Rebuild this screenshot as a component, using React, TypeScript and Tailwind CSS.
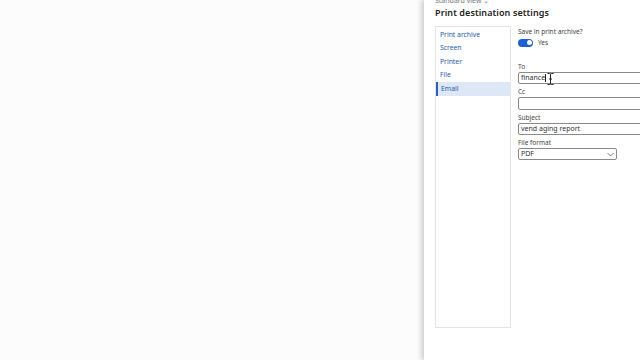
import React from 'react';

const navItems = ['Print archive', 'Screen', 'Printer', 'File', 'Email'];

const IBeam: React.FC = () => (
  <svg width="7" height="12" viewBox="0 0 7 12" className="absolute left-[28px] top-[0px]">
    <path d="M0.5 0.5 H2.5 Q3.5 0.5 3.5 1.5 V10.5 Q3.5 11.5 2.5 11.5 H0.5 M6.5 0.5 H4.5 Q3.5 0.5 3.5 1.5 M3.5 10.5 Q3.5 11.5 4.5 11.5 H6.5 M2 6 H5" fill="none" stroke="#222" strokeWidth="1" />
  </svg>
);

const Field: React.FC<{ label: string; value?: string; children?: React.ReactNode }> = ({ label, value, children }) => (
  <div className="flex flex-col">
    <span className="text-[6.5px] leading-[10px] text-[#444]">{label}</span>
    <div className="relative h-[12.5px] w-[130px] border border-[#8a8a8a] rounded-[2px] bg-white flex items-center px-[2px] text-[7px] text-[#333]">
      {value}
      {children}
    </div>
  </div>
);

const App: React.FC = () => {
  return (
    <div className="w-[640px] h-[360px] flex bg-[#fcfcfc] overflow-hidden" style={{ fontFamily: '"Noto Sans", "Open Sans", sans-serif' }}>
      <div className="w-[424px] shrink-0" />
      <div className="flex-1 bg-white shadow-[-3px_0_5px_rgba(0,0,0,0.18)] flex flex-col pl-[11px] overflow-hidden">
        <div className="text-[7px] leading-[8px] text-[#777] -mt-[3px] h-[8px]">Standard view ⌄</div>
        <div className="text-[9px] font-semibold text-[#222] leading-[12px] mt-[2px] tracking-[0.1px]">Print destination settings</div>
        <div className="flex mt-[7px] gap-[7px]">
          <div className="w-[76px] h-[302px] shrink-0 border border-[#e4e4e4] pt-[1px] flex flex-col">
            {navItems.map((item) => (
              <div
                key={item}
                className={
                  item === 'Email'
                    ? 'h-[13.5px] flex items-center pl-[3px] text-[6.8px] text-[#2a5aa9] bg-[#dde7f6] border-l-2 border-[#2b5fc0]'
                    : 'h-[13.5px] flex items-center pl-[4px] text-[6.8px] text-[#2a5aa9]'
                }
              >
                {item}
              </div>
            ))}
          </div>
          <div className="flex flex-col min-w-[140px]">
            <span className="text-[6.5px] leading-[10px] text-[#444] mt-[1px]">Save in print archive?</span>
            <div className="flex items-center gap-[5px] mt-[1px]">
              <div className="w-[15px] h-[8px] rounded-full bg-[#1d5fd0] flex items-center justify-end pr-[1.5px]">
                <div className="w-[5px] h-[5px] rounded-full bg-white" />
              </div>
              <span className="text-[6.5px] text-[#444]">Yes</span>
            </div>
            <div className="flex flex-col gap-[3px] mt-[14px]">
              <Field label="To" value="finance">
                <span className="w-[0.5px] h-[8px] bg-[#222]" />
                <IBeam />
              </Field>
              <Field label="Cc" />
              <Field label="Subject" value="vend aging report" />
              <div className="flex flex-col">
                <span className="text-[6.5px] leading-[10px] text-[#444]">File format</span>
                <div className="h-[12px] w-[99px] border border-[#8a8a8a] rounded-[2px] bg-white flex items-center justify-between px-[2px] text-[7px] text-[#333]">
                  PDF
                  <svg width="7" height="5" viewBox="0 0 7 5">
                    <path d="M0.5 1 L3.5 4 L6.5 1" fill="none" stroke="#555" strokeWidth="0.8" />
                  </svg>
                </div>
              </div>
            </div>
          </div>
        </div>
      </div>
    </div>
  );
};

export default App;
